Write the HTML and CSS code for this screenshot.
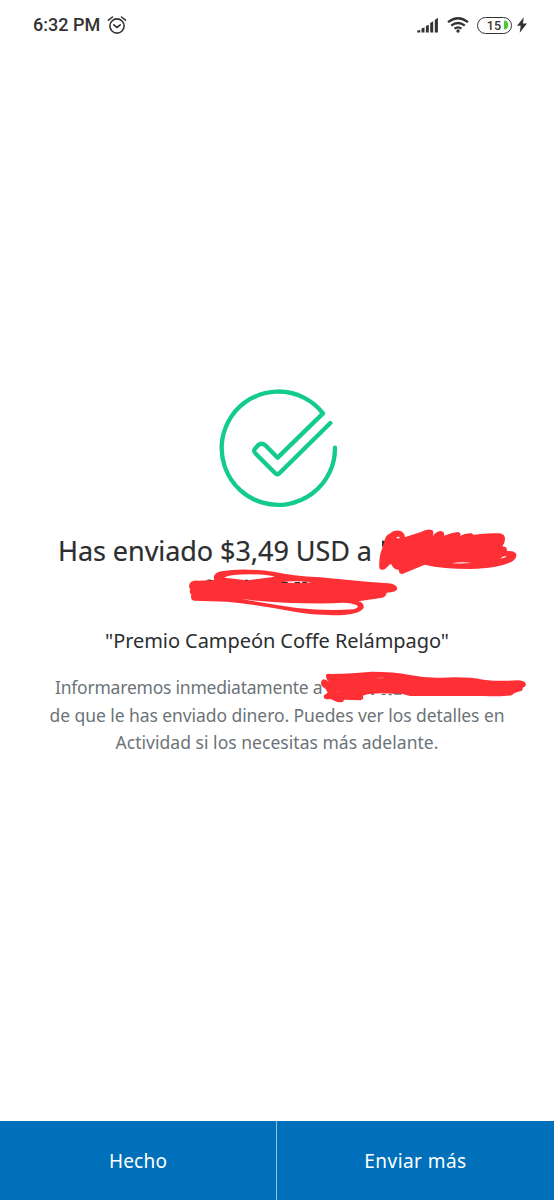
FILE: index.html
```html
<!DOCTYPE html>
<html lang="es">
<head>
<meta charset="utf-8">
<meta name="viewport" content="width=device-width">
<title>Dinero enviado</title>
<link rel="stylesheet" href="styles.css">
</head>
<body>
<div class="screen">
  <header class="status">
    <span class="time">6:32 PM</span>
    <svg class="alarm" width="20" height="20" viewBox="0 0 20 20"><circle cx="10" cy="11" r="7.1"/><path d="M1.5 5.2 5.5 2M18.5 5.2 14.5 2M6.8 9.8 10 12.4l3.2-2.6"/></svg>
    <span class="spacer"></span>
    <svg width="22" height="16" viewBox="0 0 22 16" class="solid"><path d="M.2 15.5v-1.8l3-1v2.8zM4.5 15.5v-4l3-.9v4.9zM8.9 15.5V9l2.9-1.2v7.7zM13.2 15.5V6l3-1.7v11.2zM17.8 15.5V3L20.9.8v14.7z"/></svg>
    <svg class="wifi" width="22" height="16" viewBox="0 0 22 16"><path d="M1 5.2Q11-2.8 21 5.2M4.2 8.6q6.8-5.2 13.6 0M7.5 11.7q3.5-2.7 7 0"/><circle cx="11" cy="14" r="1.7"/></svg>
    <div class="battery"><span>15</span><svg width="6" height="10" viewBox="0 0 7 10"><path d="M0 0h1.5C6 0 6 10 1.5 10H0z"/></svg></div>
    <svg width="10" height="16" viewBox="0 0 10 16" class="solid bolt"><path d="M6.8.3 0 8.8h3.7L2.7 15.7 10 6.6H5.9z"/></svg>
  </header>
  <main class="content">
    <svg class="check" width="140" height="140" viewBox="0 0 420 420"><path d="M375 203A170 170 0 1 1 339 100L203 233 166 196Q155 187 145 195L136 205Q128 213 138 222L195 279Q202 286 209 279L361 129"/></svg>
    <h1><span>Has enviado $3,49 USD a</span></h1>
    <p class="note">"Premio Campeón Coffe Relámpago"</p>
    <div class="details">
      <p class="d1">Informaremos inmediatamente a</p>
      <p class="d2">de que le has enviado dinero. Puedes ver los detalles en</p>
      <p class="d3">Actividad si los necesitas más adelante.</p>
    </div>
  </main>
  <footer class="actions">
    <button class="done">Hecho</button>
    <button class="more">Enviar más</button>
  </footer>
  <svg class="redaction" width="554" height="1200" viewBox="0 0 554 1200">
    <g transform="translate(370 520) scale(.33333)">
      <path class="ink" d="M36 62h9v18h-9z"/>
      <path d="M28 144Q26 110 37 84L44 60Q48 45 58 41Q76 26 94 34Q106 42 104 52Q130 43 153 36Q173 24 187 31Q193 37 188 49Q196 35 212 33Q225 35 222 47Q245 38 263 36Q276 38 270 48Q286 38 305 40L311 44Q350 38 389 40Q406 43 405 58Q405 67 397 79Q414 80 410 93Q430 91 438 100Q443 115 425 125Q390 144 300 147Q220 147 164 134L97 162Q87 163 86 149Q74 149 68 140Q66 133 61 132L46 146Q33 154 28 144Z"/>
      <path class="hole" d="M78 53q8-5 12 0-5 5-12 0M245 130q30-6 60-1-28 2-60 1M391 115q9-8 19-8-6 8-19 8"/>
    </g>
    <g transform="translate(180 560) scale(.33333)">
      <path fill-rule="evenodd" d="M30 70Q36 60 54 62L102 60Q98 38 125 34Q190 22 285 36Q335 48 420 52Q500 60 570 66L625 70Q650 72 652 86Q650 96 620 98Q618 112 602 114L535 124Q553 128 551 143Q542 160 491 165Q410 168 335 154Q230 134 140 125L43 122Q30 120 34 104Q26 98 31 89Q24 80 30 70ZM133 53Q150 43 210 43Q260 43 285 50L200 61ZM184 117Q300 132 460 130Q510 125 530 136Q540 143 520 148Q440 154 350 144Q260 130 184 117Z"/>
      <path class="hole" d="M305 67q35-6 90 0-45 4-90 0"/>
      <path class="ink" d="M78 61q10-6 20 1zM196 59h7v4h-7zM305 66h18v3h-18zM344 66h16v3h-16zM367 65h13v4h-13z"/>
    </g>
    <g transform="translate(310 665) scale(.33333)">
      <path class="grayink" d="M184 84h8v6h-8zM215 86h12v4h-12zM236 87h9v4h-9zM252 84h22v5h-22z"/>
      <path d="M48 30Q50 25 65 27Q130 25 185 20Q250 20 300 30Q350 40 395 38Q470 34 520 44Q570 50 625 46Q647 47 648 59Q646 66 638 68Q640 78 625 80Q610 84 607 90Q590 95 520 93H300Q275 83 250 86Q190 82 158 92Q164 103 152 106L102 104Q100 116 80 110L61 102Q38 106 42 91L53 83Q48 70 36 64Q29 50 39 43Q51 44 56 51Q46 39 48 30Z"/>
      <path class="hole" d="M202 39h19M81 79l5 1" stroke="#ff8589" stroke-width="2"/>
    </g>
  </svg>
</div>
</body>
</html>
```
FILE: styles.css
```css
* { box-sizing: border-box; }
body { margin: 0; background: #fff; }
.screen { position: relative; display: flex; flex-direction: column; width: 554px; height: 1200px; overflow: hidden; background: #fff; font-family: "Noto Sans", sans-serif; }
.status { display: flex; align-items: center; height: 50px; padding: 0 27px 0 33px; color: #333; }
.time { font: 500 18px/24px Roboto, sans-serif; }
.alarm { margin-left: 7px; fill: none; stroke: #333; stroke-width: 1.6; stroke-linecap: round; }
.spacer { flex: 1; }
.solid { fill: #333; }
.wifi { margin-left: 8px; fill: #333; }
.wifi path { fill: none; stroke: #333; stroke-width: 2.3; }
.battery { display: flex; align-items: center; justify-content: flex-end; width: 35px; height: 17px; margin-left: 8px; padding-right: 1px; border: 1.5px solid #333; border-radius: 9px; font: 500 12.5px/15px Roboto, sans-serif; }
.battery svg { margin-left: 3px; fill: #4cc82e; }
.bolt { margin-left: 5px; }
.content { flex: 1; display: flex; flex-direction: column; align-items: center; padding-top: 330px; }
.check { fill: none; stroke: #12cb8d; stroke-width: 13; stroke-linecap: round; stroke-linejoin: round; margin-left: 6px; }
h1 { align-self: flex-start; margin: 11px 0 0 58px; color: #2c2e2f; font: 400 27px/40px "Noto Sans", sans-serif; letter-spacing: -.06px; -webkit-text-stroke: .2px #2c2e2f; white-space: nowrap; }
.note { margin: 55px 0 0; color: #2c2e2f; font-size: 20px; line-height: 30px; letter-spacing: -.07px; white-space: nowrap; }
.details { align-self: stretch; margin-top: 18px; color: #6c7378; font-size: 17.5px; line-height: 27.7px; letter-spacing: -.07px; }
.details p { margin: 0; text-align: center; white-space: nowrap; }
.details .d1 { padding-left: 55px; text-align: left; letter-spacing: -.22px; }
.details .d3 { letter-spacing: .03px; }
.actions { display: grid; grid-template-columns: 277px 277px; height: 79px; background: #0070ba; }
.actions button { border: 0; padding: 0; background: none; color: #fff; font: 400 19px/28px "Noto Sans", sans-serif; letter-spacing: .2px; }
.actions .more { letter-spacing: .45px; }
.actions .done { border-right: 1px solid #8fc3e3; }
.redaction { position: absolute; top: 0; left: 0; fill: #ff3035; pointer-events: none; }
.hole { fill: #fff; }
.ink { fill: #2c2e2f; }
.grayink { fill: #6c7378; }
```
